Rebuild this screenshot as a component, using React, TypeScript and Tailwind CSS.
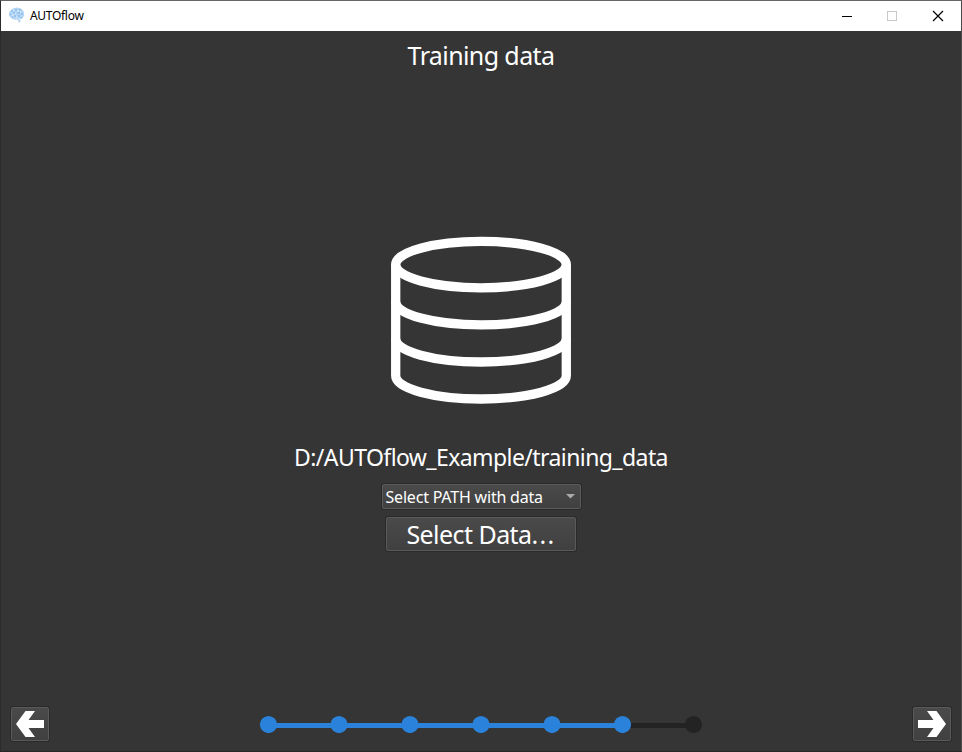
import React from "react";

const FONT = "font-['Noto_Sans',sans-serif] [font-variant-ligatures:none] whitespace-pre";
const BOX = "border border-[#5a5a5a] rounded-[2px] bg-linear-to-b from-[#4a4a4a] to-[#404040] shadow-[0_0_0_1px_#2a2a2a]";

function Brain() {
  return (
    <svg width="17" height="17" viewBox="0 0 17 17" className="block">
      <path d="M5 1.2 9 0.6l4 1 2.7 2.7.6 4-1.5 3-2.5.8.2 2.6-1.7 1-1.2-3.2-3 .2-3-1.2L.8 8.500l.3-3.500z" fill="#b5d7f5" />
      <path d="M3 4h2M7 3h2M11 3h2M5 6h2M9 6h3M13 7h2M2 7h2M6 9h2M10 9h2M4 10h1M12 11h2" stroke="#76afe4" strokeWidth="1.200" />
      <path d="M5 3h1M9 4h2M3 6h1M7 7h1M12 5h1M8 10h1M4 8h2M11 12h2" stroke="#e8f4ff" strokeWidth="1" />
    </svg>
  );
}

function Database() {
  return (
    <svg width="182" height="170" viewBox="390 235 182 170" className="block" fill="none" stroke="#fff" strokeWidth="9.300">
      <ellipse cx="481" cy="264.600" rx="85.300" ry="23.200" />
      <path d="M395.700 264.600V375.800A85.300 23.200 0 0 0 566.300 375.800V264.600" />
      <path d="M395.700 301.700A85.300 23.200 0 0 0 566.300 301.700" />
      <path d="M395.700 338.800A85.300 23.200 0 0 0 566.300 338.800" />
    </svg>
  );
}

function Arrow({ flip = false }: { flip?: boolean }) {
  return (
    <svg width="28" height="26" viewBox="0 0 28 26" className={flip ? "block -scale-x-100" : "block"}>
      <path d="M0 13 9.500 0H19L12.500 9H28V17H12.500L19 26H9.500Z" fill="#fff" />
    </svg>
  );
}

function Steps() {
  return (
    <svg width="444" height="18" viewBox="259 715 444 18" className="block">
      <path d="M622 725.500H694" stroke="#232323" strokeWidth="5" />
      <path d="M268 725.500H622" stroke="#2a82da" strokeWidth="5" />
      {[268.5, 339, 410, 481, 552, 622.5].map((x) => (
        <circle key={x} cx={x} cy="724.500" r="8.600" fill="#2a82da" />
      ))}
      <circle cx="693.500" cy="724.500" r="8.600" fill="#232323" />
    </svg>
  );
}

export default function App() {
  return (
    <div className={`flex h-[752px] w-[962px] flex-col overflow-hidden border border-t-[#666] border-r-[#4c4c4c] border-b-[#272727] border-l-[#2b2b2b] bg-[#353535] text-white ${FONT}`}>
      <header className="flex h-[30px] shrink-0 items-center bg-white text-black">
        <div className="ml-[7px] -mt-[2px]"><Brain /></div>
        <span className="ml-[5px] text-[12px] leading-[16px] tracking-[-0.300px]">AUTOflow</span>
        <svg width="104" height="12" viewBox="0 0 104 12" className="ml-auto mr-[16px]" fill="none">
          <path d="M1 6.500H11" stroke="#000" />
          <rect x="46.500" y="1.500" width="9" height="9" stroke="#c8c8c8" />
          <path d="M92 1 102 11M102 1 92 11" stroke="#000" strokeWidth="1.200" />
        </svg>
      </header>
      <main className="flex min-h-0 flex-1 flex-col items-center">
        <h1 className="mt-[6px] h-[36px] text-[25px] leading-[36px] tracking-[-0.600px]">Training data</h1>
        <div className="mt-[162px]"><Database /></div>
        <p className="mt-[35px] h-[34px] text-[23px] leading-[34px] tracking-[-0.580px]">D:/AUTOflow_Example/training_data</p>
        <div className={`mt-[10px] flex h-[25px] w-[199px] items-center justify-between pl-[3px] pr-[5px] ${BOX}`}>
          <span className="text-[16px] leading-[22px] tracking-[-0.200px]">Select PATH with data</span>
          <svg width="9" height="5" viewBox="0 0 9 5"><path d="M0 0H9L4.500 4.500Z" fill="#aaa" /></svg>
        </div>
        <button className={`mt-[8px] flex h-[34px] w-[190px] items-center justify-center ${BOX}`}>
          <span className="text-[25px] leading-[34px] tracking-[-0.550px]">Select Data<span className="tracking-[1.300px]">...</span></span>
        </button>
        <footer className="mt-auto mb-[10px] flex w-full items-center justify-between px-[10px]">
          <button className={`flex h-[34px] w-[38px] items-center justify-center ${BOX}`}><Arrow /></button>
          <Steps />
          <button className={`flex h-[34px] w-[38px] items-center justify-center ${BOX}`}><Arrow flip /></button>
        </footer>
      </main>
    </div>
  );
}
